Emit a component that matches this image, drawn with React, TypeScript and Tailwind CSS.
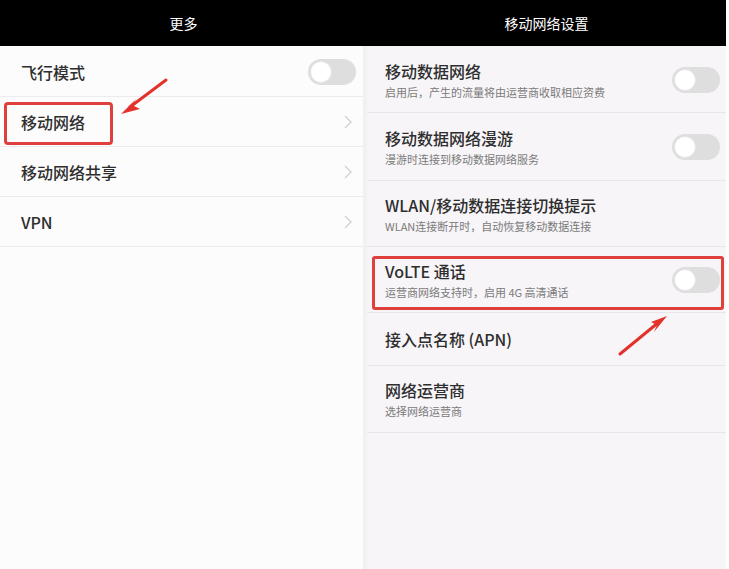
import React from "react";

const font = { fontFamily: '"Noto Sans CJK SC", "Noto Sans", sans-serif' };

function Toggle() {
  return (
    <div className="w-[48px] h-[26px] rounded-full bg-[#dedede] p-[2px] flex items-center">
      <div className="w-[22px] h-[22px] rounded-full bg-white border border-[#e6e6e6]" />
    </div>
  );
}

function Chevron() {
  return (
    <svg width="10" height="16" viewBox="0 0 10 16" fill="none">
      <path d="M2 2l6 6-6 6" stroke="#cfcfcf" strokeWidth="1.3" />
    </svg>
  );
}

function LeftRow({ title, right }: { title: string; right: React.ReactNode }) {
  return (
    <div className="h-[50px] flex items-center justify-between pl-[21px] pr-[10px] border-b border-[#ececec]">
      <span className="text-[16px] font-medium text-[#2e2e2e]">{title}</span>
      {right}
    </div>
  );
}

function RightRow({
  title,
  sub,
  toggle,
  h,
}: {
  title: string;
  sub?: string;
  toggle?: boolean;
  h: string;
}) {
  return (
    <div className={`${h} flex items-center justify-between pl-[18px] pr-[6px] border-b border-[#e8e6ea]`}>
      <div className="flex flex-col gap-[3px]">
        <span className="text-[16px] font-medium text-[#2e2e2e] leading-[22px]">{title}</span>
        {sub && <span className="text-[11px] text-[#7a7a7a] leading-[15px]">{sub}</span>}
      </div>
      {toggle && <Toggle />}
    </div>
  );
}

export default function App() {
  return (
    <div className="relative w-[729px] h-[569px] bg-white overflow-hidden" style={font}>
      <div className="flex h-full">
        {/* left panel */}
        <div className="w-[363px] flex flex-col bg-[#fcfcfc]">
          <div className="h-[46px] bg-black flex items-center justify-center pl-[4px] text-white text-[14px]">更多</div>
          <div className="h-[1px]" />
          <LeftRow title="飞行模式" right={<div className="mr-[-3px]"><Toggle /></div>} />
          <LeftRow title="移动网络" right={<Chevron />} />
          <LeftRow title="移动网络共享" right={<Chevron />} />
          <LeftRow title="VPN" right={<Chevron />} />
        </div>
        {/* gap strip */}
        <div className="w-[4px] flex flex-col">
          <div className="h-[46px] bg-black" />
          <div className="flex-1 bg-[#f1f0f2]" />
        </div>
        {/* right panel */}
        <div className="w-[359px] flex flex-col bg-[#f7f5f8]">
          <div className="h-[46px] bg-black flex items-center justify-center text-white text-[14px]">移动网络设置</div>
          <div className="h-[1px]" />
          <RightRow h="h-[66px]" title="移动数据网络" sub="启用后，产生的流量将由运营商收取相应资费" toggle />
          <RightRow h="h-[68px]" title="移动数据网络漫游" sub="漫游时连接到移动数据网络服务" toggle />
          <RightRow h="h-[66px]" title="WLAN/移动数据连接切换提示" sub="WLAN连接断开时，自动恢复移动数据连接" />
          <RightRow h="h-[66px]" title="VoLTE 通话" sub="运营商网络支持时，启用 4G 高清通话" toggle />
          <RightRow h="h-[53px]" title="接入点名称 (APN)" />
          <RightRow h="h-[67px]" title="网络运营商" sub="选择网络运营商" />
        </div>
        <div className="flex-1 bg-white" />
      </div>

      {/* annotations */}
      <div className="absolute left-[4px] top-[102px] w-[109px] h-[43px] border-[3px] border-[#e0403c] rounded-[4px]" />
      <div className="absolute left-[372px] top-[256px] w-[352px] h-[54px] border-[3px] border-[#e0403c] rounded-[3px]" />
      <svg className="absolute left-0 top-0" width="729" height="569" viewBox="0 0 729 569">
        <path d="M166 80 L130 107" stroke="#e3322c" strokeWidth="3" strokeLinecap="round" />
        <path d="M121 114 L136 99 L132 105 L140 109 Z" fill="#e3322c" />
        <path d="M620 354 L659 322" stroke="#e3322c" strokeWidth="3" strokeLinecap="round" />
        <path d="M667 316 L651 322 L657 325 L654 332 Z" fill="#e3322c" />
      </svg>
    </div>
  );
}
